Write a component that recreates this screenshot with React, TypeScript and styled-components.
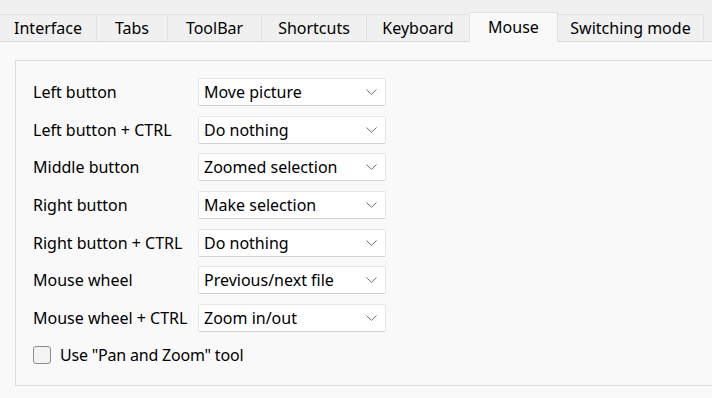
import React from "react";
import styled, { createGlobalStyle } from "styled-components";

const GlobalStyle = createGlobalStyle`
  html, body { margin: 0; padding: 0; background: #f9f9f9; }
  body { font-family: "Noto Sans", "Open Sans", "Liberation Sans", sans-serif; color: #000; }
  * { box-sizing: border-box; }
`;

const Window = styled.div`
  width: 712px;
  height: 398px;
  display: flex;
  flex-direction: column;
  overflow: hidden;
  background: #f9f9f9;
`;

const TabBar = styled.div`
  height: 42px;
  display: flex;
  align-items: flex-end;
  background: #f0f0f0;
  border-bottom: 1px solid #d9d9d9;
`;

const Tab = styled.div<{ $w: number; $active?: boolean }>`
  width: ${(p) => p.$w}px;
  height: ${(p) => (p.$active ? 30 : 27)}px;
  margin-bottom: ${(p) => (p.$active ? -1 : 0)}px;
  display: flex;
  align-items: center;
  justify-content: center;
  padding-bottom: ${(p) => (p.$active ? 2 : 0)}px;
  font-size: 16px;
  background: ${(p) => (p.$active ? "#f9f9f9" : "#f0f0f0")};
  border-top: 1px solid #e2e2e2;
  border-right: 1px solid #e2e2e2;
  border-left: ${(p) => (p.$active ? "1px solid #e2e2e2" : "none")};
  margin-left: ${(p) => (p.$active ? -1 : 0)}px;
  position: relative;
  z-index: ${(p) => (p.$active ? 1 : 0)};
`;

const Content = styled.div`
  flex: 1;
  display: flex;
  padding: 18px 0 12px 15px;
`;

const GroupBox = styled.div`
  flex: 1;
  border: 1px solid #dcdcdc;
  border-right: none;
  padding: 17px 0 0 17px;
  display: flex;
  flex-direction: column;
`;

const Form = styled.div`
  display: grid;
  grid-template-columns: 165px 188px;
  row-gap: 9.7px;
  align-items: center;
`;

const Label = styled.div`
  font-size: 16px;
  line-height: 20px;
`;

const Select = styled.div`
  height: 28px;
  display: flex;
  align-items: center;
  justify-content: space-between;
  padding: 0 8px 0 5px;
  background: #ffffff;
  border: 1px solid #e5e5e5;
  border-bottom-color: #cfcfcf;
  border-radius: 2px;
  font-size: 16px;
`;

const Chevron = () => (
  <svg width="11" height="6" viewBox="0 0 11 6">
    <polyline points="0.5,0.5 5.5,5.3 10.5,0.5" fill="none" stroke="#6e6e6e" strokeWidth="1" />
  </svg>
);

const CheckRow = styled.label`
  display: flex;
  align-items: center;
  gap: 9px;
  margin-top: 12px;
  font-size: 16px;
  letter-spacing: -0.2px;
`;

const CheckBox = styled.span`
  width: 18px;
  height: 18px;
  border: 1px solid #8d8d8d;
  border-radius: 3px;
  background: #f3f3f3;
`;

const tabs: { name: string; w: number }[] = [
  { name: "Interface", w: 97 },
  { name: "Tabs", w: 71 },
  { name: "ToolBar", w: 94 },
  { name: "Shortcuts", w: 105 },
  { name: "Keyboard", w: 103 },
  { name: "Mouse", w: 89 },
  { name: "Switching mode", w: 146 },
];

const rows: [string, string][] = [
  ["Left button", "Move picture"],
  ["Left button + CTRL", "Do nothing"],
  ["Middle button", "Zoomed selection"],
  ["Right button", "Make selection"],
  ["Right button + CTRL", "Do nothing"],
  ["Mouse wheel", "Previous/next file"],
  ["Mouse wheel + CTRL", "Zoom in/out"],
];

export default function App() {
  return (
    <>
      <GlobalStyle />
      <Window>
        <TabBar>
          {tabs.map((t) => (
            <Tab key={t.name} $w={t.w} $active={t.name === "Mouse"}>
              {t.name}
            </Tab>
          ))}
        </TabBar>
        <Content>
          <GroupBox>
            <Form>
              {rows.map(([l, v], i) => (
                <React.Fragment key={i}>
                  <Label>{l}</Label>
                  <Select>
                    <span>{v}</span>
                    <Chevron />
                  </Select>
                </React.Fragment>
              ))}
            </Form>
            <CheckRow>
              <CheckBox />
              <span>Use "Pan and Zoom" tool</span>
            </CheckRow>
          </GroupBox>
        </Content>
      </Window>
    </>
  );
}
